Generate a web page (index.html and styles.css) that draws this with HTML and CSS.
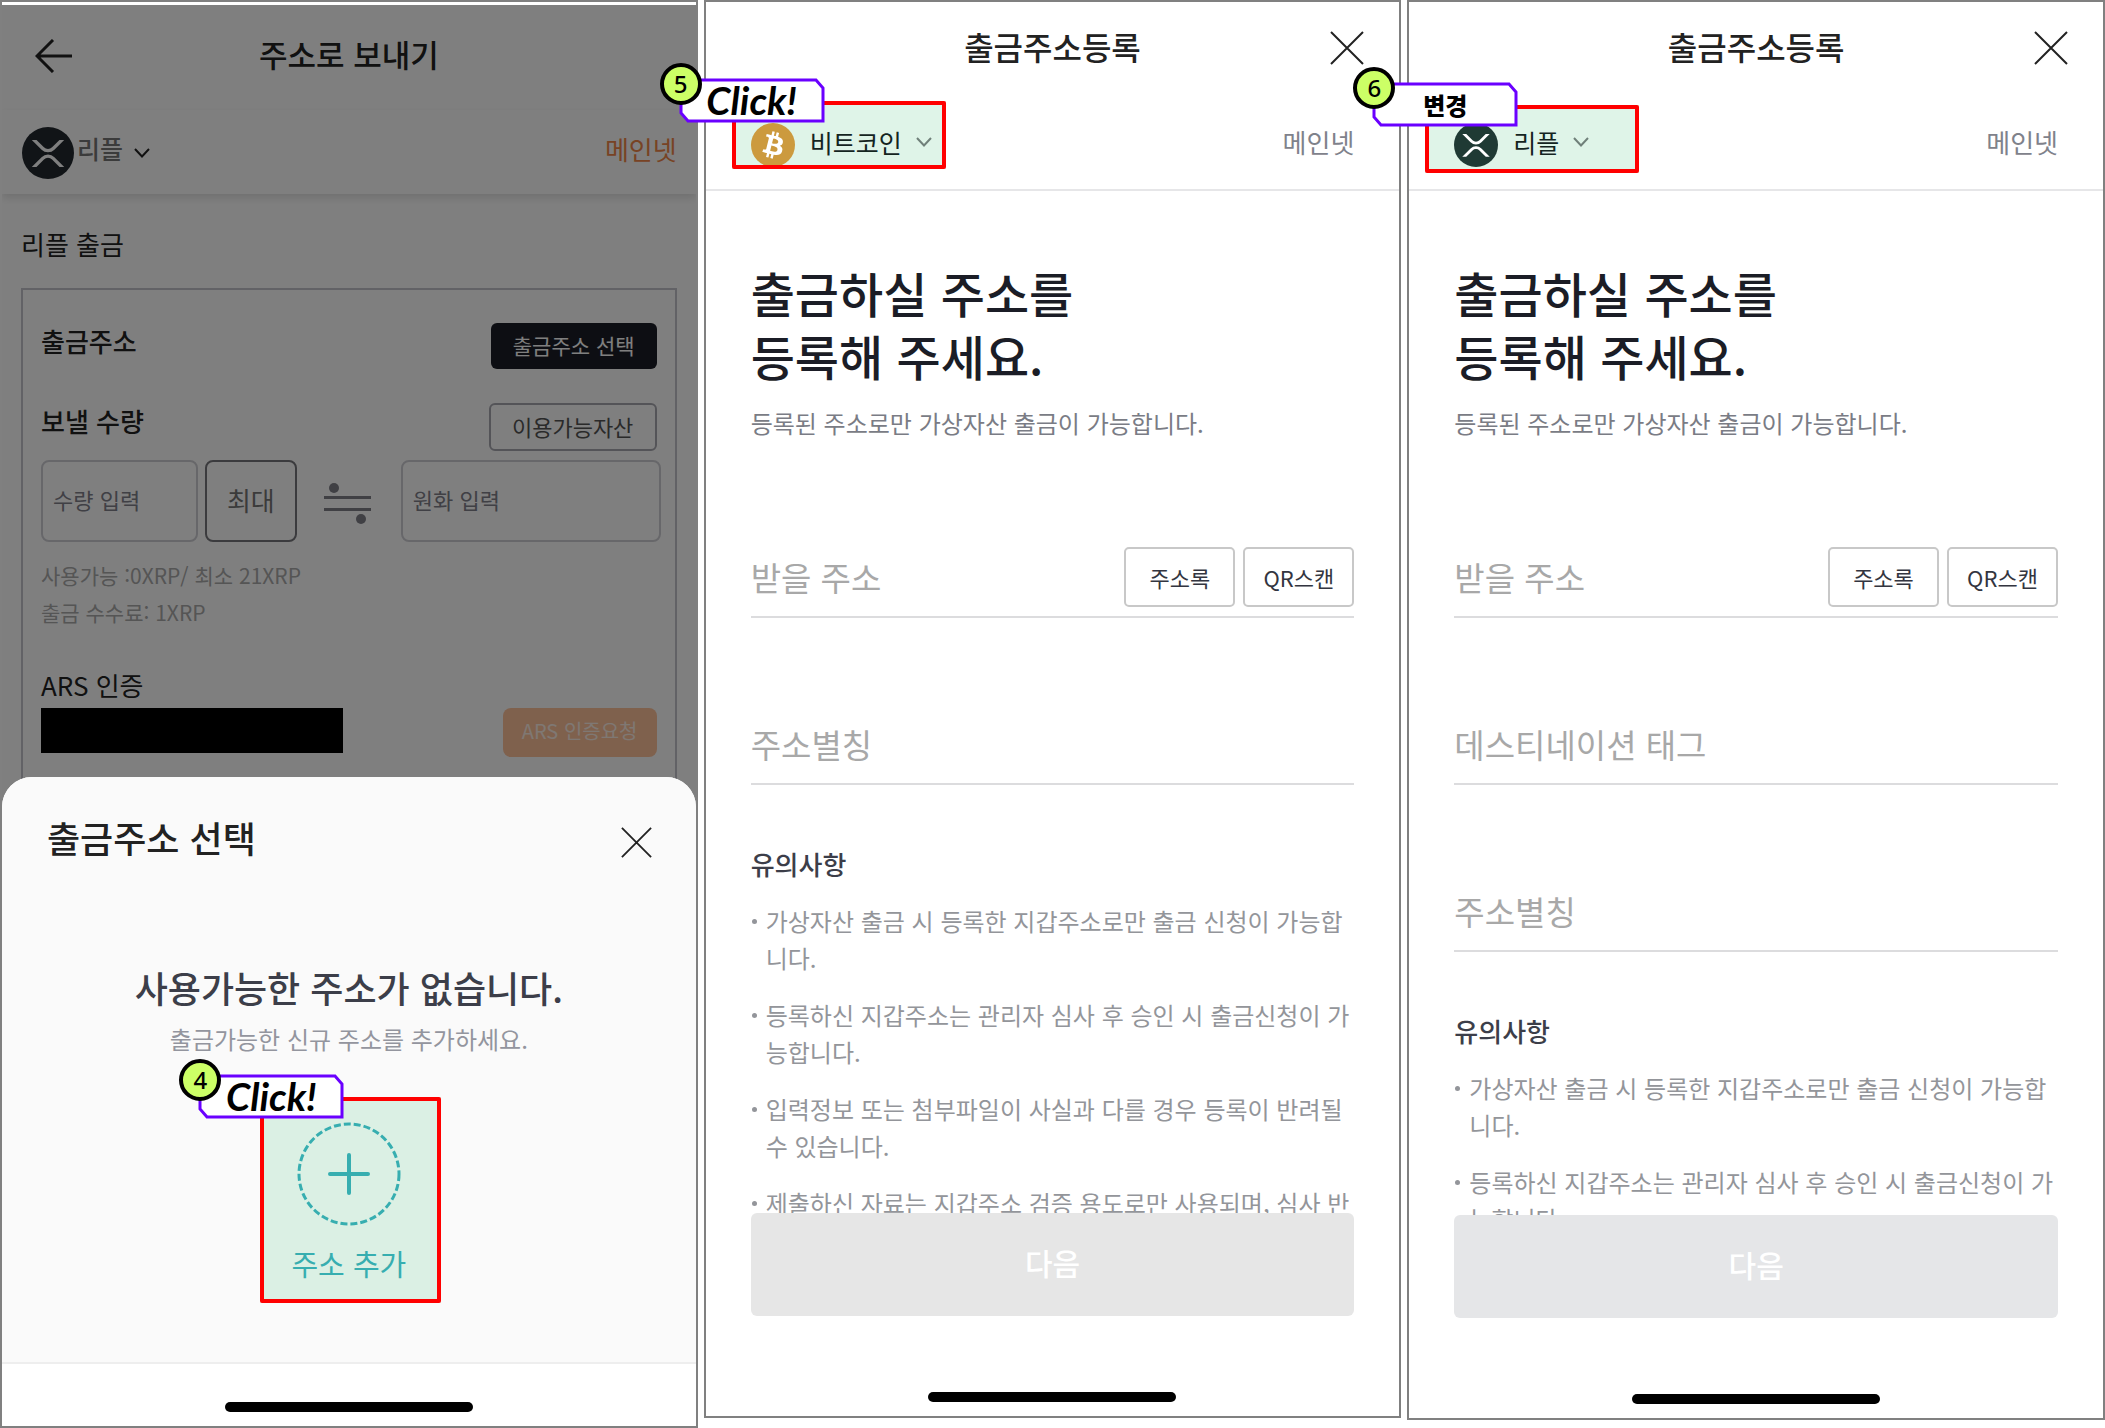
FILE: index.html
```html
<!DOCTYPE html>
<html lang="ko">
<head>
  <meta charset="UTF-8">
  <meta name="viewport" content="width=device-width, initial-scale=1.0">
  <title>출금주소 등록 안내</title>
  <link rel="stylesheet" href="styles.css">
</head>
<body>
  <!-- Shared icons -->
  <svg class="sprite" aria-hidden="true">
    <symbol id="icon-close" viewBox="0 0 34 34">
      <path d="M1 1L33 33M33 1L1 33" fill="none" stroke="currentColor" stroke-width="2"/>
    </symbol>
    <symbol id="icon-chevron" viewBox="0 0 16 10">
      <path d="M1 1L8 8.500L15 1" fill="none" stroke="currentColor" stroke-width="2"/>
    </symbol>
    <symbol id="icon-xrp" viewBox="0 0 32 32">
      <circle cx="16" cy="16" r="16" fill="currentColor"/>
      <path fill="#fff" d="M23.07 8h2.89l-6.015 5.957a5.621 5.621 0 01-7.89 0L6.035 8H8.93l4.57 4.523a3.556 3.556 0 004.996 0L23.07 8zM8.895 24.563H6l6.055-5.993a5.621 5.621 0 017.89 0L26 24.562h-2.895L18.5 20a3.556 3.556 0 00-4.996 0l-4.61 4.563z"/>
    </symbol>
    <symbol id="icon-btc" viewBox="0 0 32 32">
      <circle cx="16" cy="16" r="16" fill="currentColor"/>
      <path fill="#fff" d="M23.189 14.02c.314-2.096-1.283-3.223-3.465-3.975l.708-2.84-1.728-.43-.69 2.765c-.454-.114-.92-.22-1.385-.326l.695-2.783L15.596 6l-.708 2.839c-.376-.086-.746-.17-1.104-.26l.002-.009-2.384-.595-.46 1.846s1.283.294 1.256.312c.7.175.826.638.805 1.006l-.806 3.235c.048.012.11.03.18.057l-.183-.045-1.13 4.532c-.086.212-.303.531-.793.41.018.025-1.256-.313-1.256-.313l-.858 1.978 2.25.561c.418.105.828.215 1.231.318l-.715 2.872 1.727.43.708-2.84c.472.127.93.245 1.378.357l-.706 2.828 1.728.43.715-2.866c2.948.558 5.164.333 6.097-2.333.752-2.146-.037-3.385-1.588-4.192 1.13-.26 1.98-1.003 2.207-2.538zm-3.95 5.538c-.533 2.147-4.148.986-5.32.695l.95-3.805c1.172.293 4.929.872 4.37 3.11zm.535-5.569c-.487 1.953-3.495.96-4.47.717l.86-3.45c.975.243 4.118.696 3.61 2.733z"/>
    </symbol>
    <symbol id="icon-tag" viewBox="0 0 146 45">
      <path d="M2 2H137L144 10V43H9L2 35Z" fill="#fff" stroke="#6a00ff" stroke-width="3"/>
    </symbol>
  </svg>

  <!-- Step 4: send to address, sheet open -->
  <section class="screen screen-send">
    <div class="screen-body">
      <header class="send-title">
        <button class="icon-button" aria-label="뒤로">
          <svg width="38" height="34" viewBox="0 0 38 34" aria-hidden="true">
            <path d="M18 1L2 17L18 33M2 17H37" fill="none" stroke="currentColor" stroke-width="3"/>
          </svg>
        </button>
        <h1>주소로 보내기</h1>
      </header>
      <div class="send-coin">
        <button class="coin coin-plain">
          <svg class="coin-icon" aria-hidden="true"><use href="#icon-xrp"/></svg>
          <span>리플</span>
          <svg class="chevron" aria-hidden="true"><use href="#icon-chevron"/></svg>
        </button>
        <a href="#" class="network">메인넷</a>
      </div>

      <h2 class="send-heading">리플 출금</h2>
      <div class="card">
        <div class="card-row">
          <strong>출금주소</strong>
          <button class="small-button dark">출금주소 선택</button>
        </div>
        <div class="card-row row-amount">
          <strong>보낼 수량</strong>
          <button class="small-button outline">이용가능자산</button>
        </div>
        <div class="amounts">
          <input type="text" class="amount-coin" placeholder="수량 입력" aria-label="수량 입력">
          <button class="max-button">최대</button>
          <svg class="approx" width="47" height="44" viewBox="0 0 47 44" aria-hidden="true">
            <path d="M0 15.500H47M0 27.500H47" stroke="#808088" stroke-width="3"/>
            <circle cx="10" cy="6" r="5" fill="#808088"/>
            <circle cx="37" cy="37" r="5" fill="#808088"/>
          </svg>
          <input type="text" class="amount-krw" placeholder="원화 입력" aria-label="원화 입력">
        </div>
        <p class="fees">사용가능 :0XRP/ 최소 21XRP<br>출금 수수료: 1XRP</p>
        <p class="ars-title">ARS 인증</p>
        <div class="card-row row-ars">
          <span class="redacted"></span>
          <button class="small-button ars">ARS 인증요청</button>
        </div>
      </div>
    </div>
    <div class="dim"></div>

    <div class="sheet" role="dialog" aria-labelledby="sheetTitle">
      <div class="sheet-body">
        <div class="sheet-title">
          <h2 id="sheetTitle">출금주소 선택</h2>
          <button class="icon-button" aria-label="닫기">
            <svg width="31" height="31" aria-hidden="true"><use href="#icon-close"/></svg>
          </button>
        </div>
        <p class="empty-title">사용가능한 주소가 없습니다.</p>
        <p class="empty-text">출금가능한 신규 주소를 추가하세요.</p>
        <div class="target target-add">
          <button class="add-address">
            <svg width="104" height="104" viewBox="0 0 104 104" aria-hidden="true">
              <circle cx="52" cy="52" r="50" fill="none" stroke="currentColor" stroke-width="3" stroke-dasharray="7 3"/>
              <path d="M52 33V71M33 52H71" stroke="currentColor" stroke-width="4" stroke-linecap="round"/>
            </svg>
            <span>주소 추가</span>
          </button>
          <div class="callout">
            <svg class="callout-tag" aria-hidden="true"><use href="#icon-tag"/></svg>
            <span class="callout-text">Click!</span>
            <span class="step">4</span>
          </div>
        </div>
      </div>
      <div class="home-bar"></div>
    </div>
  </section>

  <!-- Step 5: register address, Bitcoin -->
  <section class="screen screen-btc">
    <header class="reg-title">
      <h1>출금주소등록</h1>
      <button class="icon-button" aria-label="닫기">
        <svg width="34" height="34" aria-hidden="true"><use href="#icon-close"/></svg>
      </button>
    </header>
    <div class="reg-coin">
      <div class="target target-btc">
        <button class="coin">
          <svg class="coin-icon btc" aria-hidden="true"><use href="#icon-btc"/></svg>
          <span>비트코인</span>
          <svg class="chevron" aria-hidden="true"><use href="#icon-chevron"/></svg>
        </button>
        <div class="callout">
          <svg class="callout-tag" aria-hidden="true"><use href="#icon-tag"/></svg>
          <span class="callout-text">Click!</span>
          <span class="step">5</span>
        </div>
      </div>
      <a href="#" class="network">메인넷</a>
    </div>
    <div class="reg-body">
      <h2>출금하실 주소를<br>등록해 주세요.</h2>
      <p class="lead">등록된 주소로만 가상자산 출금이 가능합니다.</p>
      <div class="field">
        <input type="text" placeholder="받을 주소" aria-label="받을 주소">
        <button class="field-button">주소록</button>
        <button class="field-button">QR스캔</button>
      </div>
      <div class="field">
        <input type="text" placeholder="주소별칭" aria-label="주소별칭">
      </div>
      <h3>유의사항</h3>
      <ul class="notices">
        <li>가상자산 출금 시 등록한 지갑주소로만 출금 신청이 가능합니다.</li>
        <li>등록하신 지갑주소는 관리자 심사 후 승인 시 출금신청이 가능합니다.</li>
        <li>입력정보 또는 첨부파일이 사실과 다를 경우 등록이 반려될 수 있습니다.</li>
        <li>제출하신 자료는 지갑주소 검증 용도로만 사용되며, 심사 반</li>
      </ul>
    </div>
    <footer class="reg-footer">
      <button class="next">다음</button>
      <div class="home-bar"></div>
    </footer>
  </section>

  <!-- Step 6: register address, Ripple -->
  <section class="screen screen-xrp">
    <header class="reg-title">
      <h1>출금주소등록</h1>
      <button class="icon-button" aria-label="닫기">
        <svg width="34" height="34" aria-hidden="true"><use href="#icon-close"/></svg>
      </button>
    </header>
    <div class="reg-coin">
      <div class="target target-xrp">
        <button class="coin">
          <svg class="coin-icon xrp" aria-hidden="true"><use href="#icon-xrp"/></svg>
          <span>리플</span>
          <svg class="chevron" aria-hidden="true"><use href="#icon-chevron"/></svg>
        </button>
        <div class="callout">
          <svg class="callout-tag" aria-hidden="true"><use href="#icon-tag"/></svg>
          <span class="callout-text korean">변경</span>
          <span class="step">6</span>
        </div>
      </div>
      <a href="#" class="network">메인넷</a>
    </div>
    <div class="reg-body">
      <h2>출금하실 주소를<br>등록해 주세요.</h2>
      <p class="lead">등록된 주소로만 가상자산 출금이 가능합니다.</p>
      <div class="field">
        <input type="text" placeholder="받을 주소" aria-label="받을 주소">
        <button class="field-button">주소록</button>
        <button class="field-button">QR스캔</button>
      </div>
      <div class="field">
        <input type="text" placeholder="데스티네이션 태그" aria-label="데스티네이션 태그">
      </div>
      <div class="field">
        <input type="text" placeholder="주소별칭" aria-label="주소별칭">
      </div>
      <h3>유의사항</h3>
      <ul class="notices">
        <li>가상자산 출금 시 등록한 지갑주소로만 출금 신청이 가능합니다.</li>
        <li>등록하신 지갑주소는 관리자 심사 후 승인 시 출금신청이 가능합니다.</li>
      </ul>
    </div>
    <footer class="reg-footer">
      <button class="next">다음</button>
      <div class="home-bar"></div>
    </footer>
  </section>
</body>
</html>
```

FILE: styles.css
```css
/* General Styles */
* {
  margin: 0;
  padding: 0;
  box-sizing: border-box;
}

body {
  font-family: "Noto Sans CJK KR", sans-serif;
  display: grid;
  grid-template-columns: repeat(3, minmax(0, 1fr));
  gap: 6px;
  align-items: start;
  height: 100vh;
  background: #fff;
  color: #222;
  word-break: break-all;
}

button, input {
  font: inherit;
  color: inherit;
  background: none;
  border: none;
}

button {
  cursor: pointer;
  white-space: nowrap;
}

a {
  text-decoration: none;
}

.sprite {
  position: absolute;
  width: 0;
  height: 0;
}

.screen {
  position: relative;
  display: flex;
  flex-direction: column;
  height: 100vh;
  border: 2px solid #808080;
  background: #fff;
}

.screen-btc {
  height: calc(100vh - 10px);
}

.screen-xrp {
  height: calc(100vh - 8px);
}

.icon-button,
.icon-button svg {
  display: block;
}

.home-bar {
  width: 248px;
  height: 10px;
  margin: 0 auto;
  border-radius: 5px;
  background: #000;
}

/* Coin selector */
.coin {
  display: flex;
  align-items: center;
  font-size: 25px;
}

.coin-icon {
  flex: none;
  width: 44px;
  height: 44px;
  margin: 6px 15px 0 0;
}

.coin-icon.btc {
  color: #cc9a3e;
}

.coin-icon.xrp {
  color: #1f3a34;
}

.chevron {
  width: 16px;
  height: 10px;
  margin-left: 14px;
}

.network {
  font-size: 26px;
  color: #7f828b;
}

/* Send screen */
.screen-body {
  flex: 1;
  min-height: 0;
  overflow: hidden;
}

.dim {
  position: absolute;
  inset: 3px 0 0;
  background: rgba(0, 0, 0, 0.5);
}

.send-title {
  display: grid;
  grid-template-columns: 38px 1fr 38px;
  align-items: center;
  height: 108px;
  padding: 0 33px;
}

.send-title h1,
.reg-title h1 {
  padding-bottom: 5px;
  font-weight: 500;
  text-align: center;
}

.send-title h1 {
  font-size: 31px;
}

.reg-title h1 {
  font-size: 32px;
}

.send-coin {
  display: flex;
  justify-content: space-between;
  align-items: center;
  height: 84px;
  padding: 0 19px 8px 20px;
  box-shadow: 0 4px 8px rgba(0, 0, 0, 0.12);
}

.send-coin .coin-icon {
  width: 52px;
  height: 52px;
  margin: 10px 3px 0 0;
  color: #23292f;
}

.coin-plain span {
  color: #777;
  font-weight: 500;
}

.coin-plain .chevron {
  margin: 10px 0 0 11px;
}

.send-coin .network {
  color: #f08748;
}

.send-heading {
  margin: 30px 19px 24px;
  font-size: 26px;
  font-weight: 400;
  line-height: 40px;
}

.card {
  margin: 0 19px;
  padding: 33px 14px 40px 18px;
  border: 2px solid #c4c4cc;
}

.card-row {
  display: flex;
  justify-content: space-between;
  align-items: flex-start;
  padding-right: 4px;
}

.card-row strong {
  font-size: 26px;
  font-weight: 500;
  line-height: 36px;
}

.row-amount {
  margin: 34px 0 9px;
}

.small-button {
  width: 166px;
  height: 46px;
  padding-bottom: 3px;
  border-radius: 6px;
  font-size: 22px;
}

.dark {
  background: #1b1d26;
  color: #fff;
  font-size: 21px;
}

.outline {
  width: 168px;
  height: 48px;
  border: 2px solid #a8a8b0;
  color: #555;
}

.amounts {
  display: flex;
  align-items: center;
}

.amounts input {
  min-width: 0;
  height: 82px;
  padding: 0 10px 5px;
  border: 2px solid #cfcfd4;
  border-radius: 8px;
  font-size: 22px;
}

.amounts input::placeholder {
  color: #80808a;
}

.amounts .amount-coin {
  flex: 1 1 157px;
}

.amounts .amount-krw {
  flex: 1 1 260px;
}

.max-button {
  width: 92px;
  height: 82px;
  margin-left: 7px;
  padding-bottom: 3px;
  border: 2px solid #77777c;
  border-radius: 8px;
  font-size: 26px;
  color: #777;
}

.approx {
  flex: none;
  margin: 6px 30px 0 27px;
}

.fees {
  margin-top: 15px;
  font-size: 21px;
  line-height: 37px;
  color: #aaa;
}

.ars-title {
  margin: 34px 0 3px;
  font-size: 26px;
  line-height: 40px;
}

.redacted {
  width: 302px;
  height: 45px;
  background: #000;
}

.ars {
  width: 154px;
  height: 49px;
  padding-bottom: 4px;
  border-radius: 8px;
  background: #ffc29b;
  color: #fff0e6;
  font-size: 20px;
}

/* Bottom sheet */
.sheet {
  position: absolute;
  left: 0;
  right: 0;
  bottom: 0;
  padding-bottom: 14px;
  border-radius: 30px 30px 0 0;
  background: #fff;
}

.sheet-body {
  display: flex;
  flex-direction: column;
  align-items: center;
  margin-bottom: 38px;
  padding-bottom: 59px;
  border-bottom: 2px solid #eee;
  border-radius: 30px 30px 0 0;
  background: #fafafa;
}

.sheet-title {
  display: flex;
  justify-content: space-between;
  align-items: center;
  align-self: stretch;
  padding: 34px 44px 0 45px;
}

.sheet-title h2 {
  font-size: 36px;
  font-weight: 500;
  line-height: 52px;
}

.sheet-title .icon-button {
  margin-top: 11px;
}

.empty-title {
  margin-top: 98px;
  font-size: 36px;
  font-weight: 500;
  line-height: 52px;
  color: #3c3e49;
}

.empty-text {
  margin: 8px 0 40px;
  font-size: 24px;
  line-height: 36px;
  color: #93959e;
}

.add-address {
  display: flex;
  flex-direction: column;
  align-items: center;
  width: 181px;
  height: 206px;
  padding: 25px 4px 0 0;
  background: #dbf0e4;
  color: #37aeb0;
  font-size: 29px;
  line-height: 44px;
}

.add-address span {
  margin-top: 15px;
}

/* Highlighted targets */
.target {
  position: relative;
}

.target::after {
  content: "";
  position: absolute;
  inset: 0;
  border: 4px solid #f00;
  border-radius: 2px;
  pointer-events: none;
}

.target .coin {
  width: 214px;
  height: 68px;
  background: #dff4e8;
  color: #14241f;
}

.target .chevron {
  color: #70807a;
}

.target-add {
  margin-left: 4px;
}

.target-btc {
  margin: 7px 0 0 26px;
}

.target-btc .coin {
  padding: 13px 0 0 19px;
}

.target-xrp {
  margin: 11px 0 0 16px;
}

.target-xrp .coin {
  padding: 5px 0 0 29px;
}

.callout {
  position: absolute;
  z-index: 10;
  top: -23px;
  left: -53px;
  display: flex;
  justify-content: center;
  align-items: center;
  width: 146px;
  height: 45px;
}

.target-add .callout {
  left: -62px;
}

.callout-tag {
  position: absolute;
  inset: 0;
  width: 146px;
  height: 45px;
}

.callout-text {
  position: relative;
  font-family: Lato, sans-serif;
  font-size: 39px;
  font-weight: 700;
  font-style: italic;
  line-height: 45px;
  color: #000;
}

.callout-text.korean {
  font-family: "Noto Sans CJK KR", sans-serif;
  font-size: 24px;
  font-weight: 900;
  font-style: normal;
}

.step {
  position: absolute;
  top: -15px;
  left: -19px;
  width: 42px;
  height: 42px;
  border: 4px solid #000;
  border-radius: 50%;
  background: #cf6;
  font-family: "Noto Sans", sans-serif;
  font-size: 24px;
  font-weight: 500;
  line-height: 34px;
  text-align: center;
  color: #000;
}

/* Register screens */
.reg-title {
  display: grid;
  grid-template-columns: 34px 1fr 34px;
  align-items: center;
  height: 92px;
  padding: 0 35px;
}

.reg-title h1 {
  grid-column: 2;
}

.reg-coin {
  display: flex;
  justify-content: space-between;
  align-items: flex-start;
  height: 97px;
  padding-right: 45px;
  border-bottom: 2px solid #e6e6e8;
}

.reg-coin .network {
  line-height: 95px;
}

.reg-body {
  flex: 1;
  min-height: 0;
  overflow: hidden;
  padding: 70px 45px 0 45px;
}

.reg-body h2 {
  font-size: 48px;
  font-weight: 500;
  line-height: 63px;
  color: #1b1d26;
}

.lead {
  margin: 18px 0 105px;
  font-size: 24px;
  line-height: 36px;
  color: #7a7c85;
}

.field {
  display: flex;
  align-items: center;
  gap: 8px;
  height: 72px;
  margin-bottom: 95px;
  padding-bottom: 8px;
  border-bottom: 2px solid #dcdcde;
}

.field input {
  flex: 1;
  min-width: 0;
  font-size: 33px;
}

.field input::placeholder {
  color: #a8a8a8;
}

.field-button {
  width: 111px;
  height: 60px;
  border: 2px solid #c8c8c8;
  border-radius: 5px;
  font-size: 22px;
  color: #333540;
}

.reg-body h3 {
  margin: -34px 0 20px;
  font-size: 26px;
  font-weight: 500;
  line-height: 36px;
  color: #3c3e49;
}

.notices {
  list-style: none;
  font-size: 24px;
  line-height: 37px;
  color: #93959a;
}

.notices li {
  position: relative;
  margin-bottom: 20px;
  padding-left: 15px;
}

.notices li::before {
  content: "";
  position: absolute;
  top: 17px;
  left: 1px;
  width: 5px;
  height: 5px;
  border-radius: 50%;
  background: #93959a;
}

.reg-footer {
  padding: 0 45px 14px 45px;
}

.next {
  display: block;
  width: 100%;
  height: 103px;
  margin-bottom: 76px;
  padding-bottom: 6px;
  border-radius: 6px;
  background: #e6e6e6;
  color: #fff;
  font-size: 30px;
  font-weight: 500;
}

.screen-xrp .next {
  background: #e5e6e8;
}
```
